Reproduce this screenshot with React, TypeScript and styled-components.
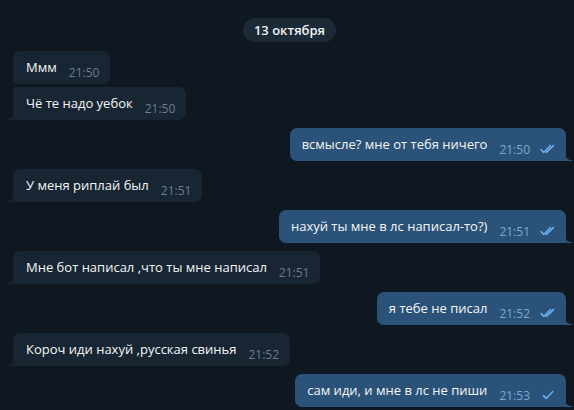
import React from "react";
import styled, { createGlobalStyle, css } from "styled-components";

type Status = "read" | "sent";
type Msg = {
  out: boolean;
  text: string;
  time: string;
  tail: boolean;
  status?: Status;
};

const messages: Msg[] = [
  { out: false, text: "Ммм", time: "21:50", tail: false },
  { out: false, text: "Чё те надо уебок", time: "21:50", tail: true },
  { out: true, text: "всмысле? мне от тебя ничего", time: "21:50", tail: true, status: "read" },
  { out: false, text: "У меня риплай был", time: "21:51", tail: true },
  { out: true, text: "нахуй ты мне в лс написал-то?)", time: "21:51", tail: true, status: "read" },
  { out: false, text: "Мне бот написал ,что ты мне написал", time: "21:51", tail: true },
  { out: true, text: "я тебе не писал", time: "21:52", tail: true, status: "read" },
  { out: false, text: "Короч иди нахуй ,русская свинья", time: "21:52", tail: true },
  { out: true, text: "сам иди, и мне в лс не пиши", time: "21:53", tail: true, status: "sent" },
];

const GlobalStyle = createGlobalStyle`
  html, body {
    margin: 0;
    padding: 0;
    background: #0f1721;
  }
  body {
    font-family: "Open Sans", "Noto Sans", sans-serif;
    -webkit-font-smoothing: antialiased;
  }
`;

const Chat = styled.div`
  width: 574px;
  height: 410px;
  overflow: hidden;
  background: #0f1721;
  display: flex;
  flex-direction: column;
  padding: 18px 8px 0 13px;
  box-sizing: border-box;
`;

const DateRow = styled.div`
  display: flex;
  justify-content: center;
  margin-bottom: 9px;
`;

const DatePill = styled.div`
  background: #1c2937;
  color: #f0f3f6;
  font-size: 13px;
  font-weight: 600;
  line-height: 24px;
  height: 24px;
  padding: 0 11px;
  border-radius: 12px;
`;

const Row = styled.div<{ $out: boolean; $gap: number }>`
  display: flex;
  justify-content: ${(p) => (p.$out ? "flex-end" : "flex-start")};
  margin-top: ${(p) => p.$gap}px;
`;

const Bubble = styled.div<{ $out: boolean; $tail: boolean; $joinedTop: boolean }>`
  position: relative;
  display: flex;
  align-items: flex-start;
  padding: 7px ${(p) => (p.$out ? 10 : 11)}px 7px ${(p) => (p.$out ? 12 : 13)}px;
  background: ${(p) => (p.$out ? "#2b5278" : "#182533")};
  border-radius: 7px;
  ${(p) =>
    !p.$out &&
    css`
      border-bottom-left-radius: ${p.$tail ? 0 : 3}px;
      border-top-left-radius: ${p.$joinedTop ? 3 : 7}px;
    `}
  ${(p) =>
    p.$out &&
    p.$tail &&
    css`
      border-bottom-right-radius: 0;
    `}
  ${(p) =>
    p.$tail &&
    css`
      &::after {
        content: "";
        position: absolute;
        bottom: 0;
        width: 6px;
        height: 8px;
        ${p.$out
          ? css`
              right: -6px;
              background: radial-gradient(circle at 100% 0, transparent 7px, #2b5278 7.5px);
            `
          : css`
              left: -6px;
              background: radial-gradient(circle at 0 0, transparent 7px, #182533 7.5px);
            `}
      }
    `}
`;

const Text = styled.span`
  color: #f5f6f7;
  font-size: 13px;
  line-height: 19px;
  white-space: nowrap;
`;

const Meta = styled.span<{ $out: boolean }>`
  display: flex;
  align-items: center;
  gap: 10px;
  margin: 8px 0 -4px 12px;
  font-size: 12px;
  line-height: 13px;
  color: ${(p) => (p.$out ? "#7da8d3" : "#6c7d8e")};
`;

const Ticks = styled.svg`
  display: block;
  width: 16px;
  height: 10px;
  margin-top: -1px;
`;

const StatusIcon = ({ status }: { status: Status }) => (
  <Ticks viewBox="0 0 16 10" fill="none" stroke="#6ab2f2" strokeWidth="1.5" strokeLinecap="round" strokeLinejoin="round">
    {status === "read" ? (
      <>
        <path d="M1 5.6 L3.8 8.4 L10.4 1.6" />
        <path d="M6.4 8.4 L13.4 1.6" />
      </>
    ) : (
      <path d="M3.5 5.6 L6.3 8.4 L12.9 1.6" />
    )}
  </Ticks>
);

export default function App() {
  return (
    <>
      <GlobalStyle />
      <Chat>
        <DateRow>
          <DatePill>13 октября</DatePill>
        </DateRow>
        {messages.map((m, i) => {
          const prev = messages[i - 1];
          const joinedTop = !!prev && prev.out === m.out;
          const gap = i === 0 ? 0 : joinedTop ? 3 : 8;
          return (
            <Row key={i} $out={m.out} $gap={gap}>
              <Bubble $out={m.out} $tail={m.tail} $joinedTop={joinedTop}>
                <Text>{m.text}</Text>
                <Meta $out={m.out}>
                  {m.time}
                  {m.status && <StatusIcon status={m.status} />}
                </Meta>
              </Bubble>
            </Row>
          );
        })}
      </Chat>
    </>
  );
}
